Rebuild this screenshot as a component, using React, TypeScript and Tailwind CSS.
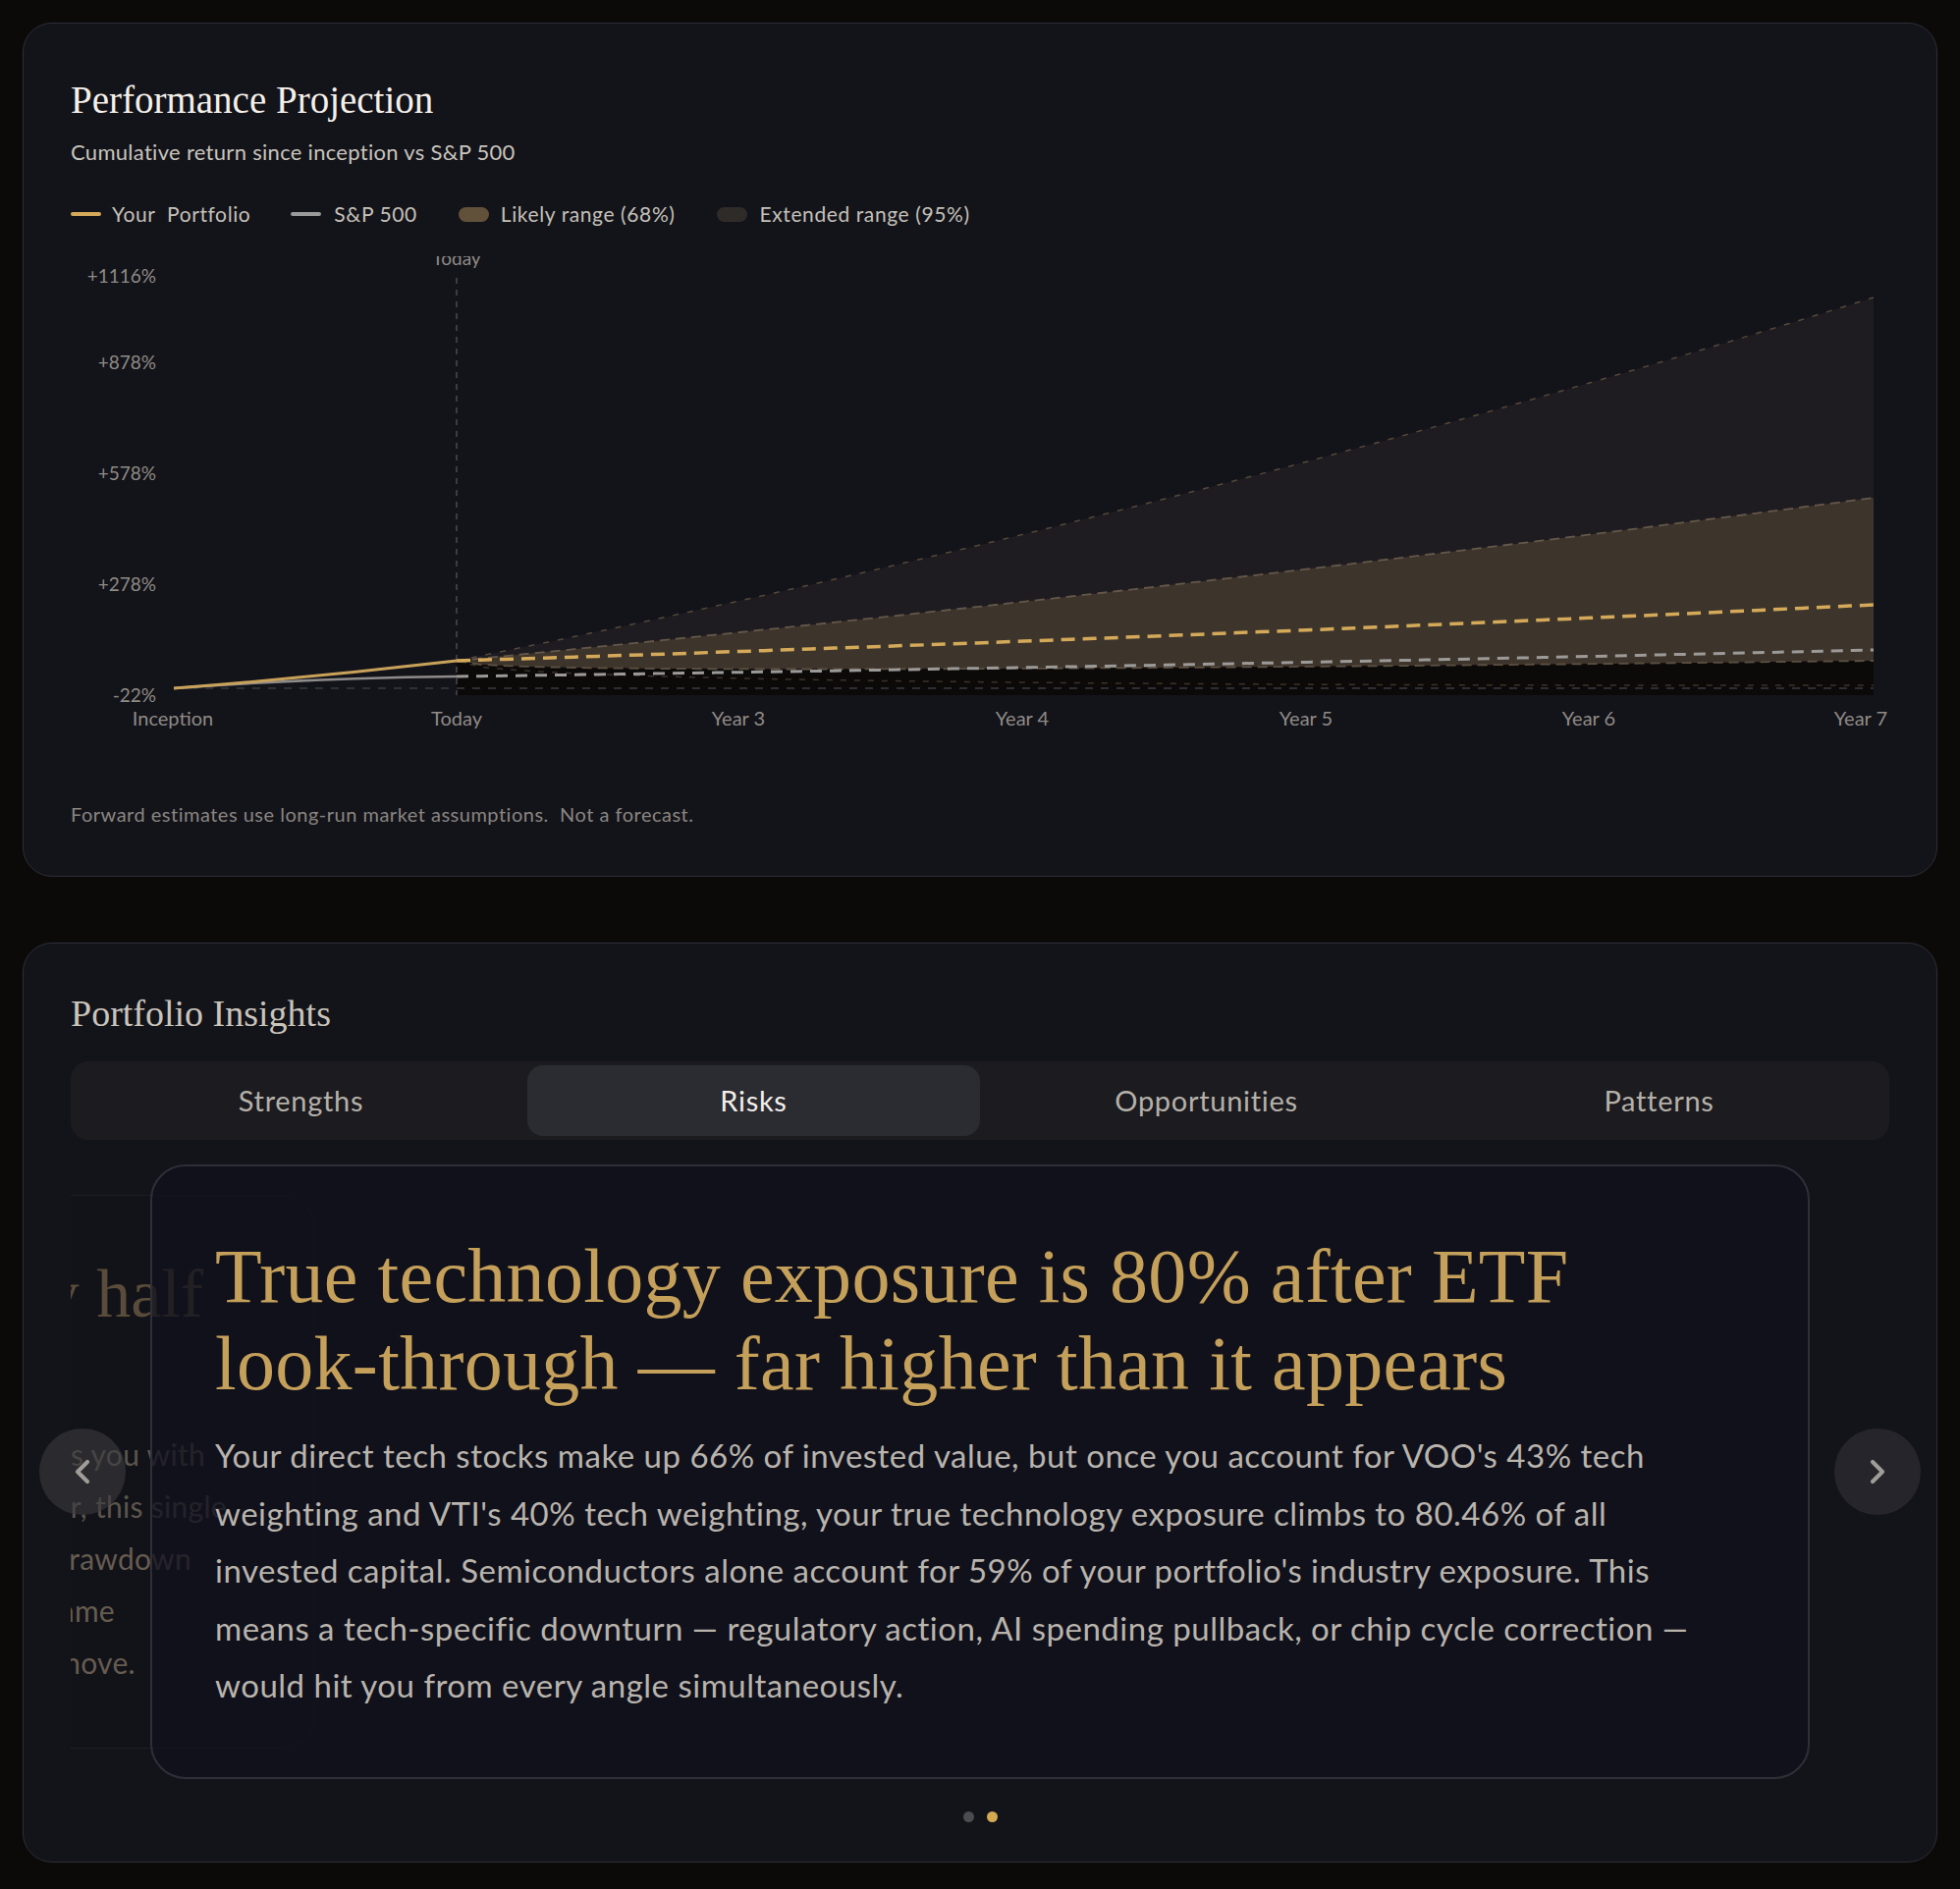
import React from "react";
import { ChevronLeft, ChevronRight } from "lucide-react";

const serif = { fontFamily: '"Liberation Serif", "DejaVu Serif", serif' };
const sans = { fontFamily: 'Lato, "Noto Sans", sans-serif' };

const X0 = 465;
const X1 = 1908;
const N = 60;

function pts(f: (t: number) => number) {
  const arr: [number, number][] = [];
  for (let i = 0; i <= N; i++) {
    const t = i / N;
    arr.push([X0 + t * (X1 - X0), f(t)]);
  }
  return arr;
}
const toPath = (a: [number, number][]) =>
  a.map((p, i) => `${i === 0 ? "M" : "L"}${p[0].toFixed(1)},${p[1].toFixed(1)}`).join(" ");
const area = (top: [number, number][], bottom: [number, number][]) =>
  toPath(top) + " " + [...bottom].reverse().map((p) => `L${p[0].toFixed(1)},${p[1].toFixed(1)}`).join(" ") + " Z";

const upper95 = pts((t) => 673 - (290 * t + 80 * t * t));
const upper68 = pts((t) => 673 - (140 * t + 26 * t * t));
const lower68 = pts((t) => 673 + 34 * Math.sqrt(t) - 34 * t);
const lower95 = pts((t) => 673 + 52 * Math.sqrt(t) - 27 * t);
const median = pts((t) => 673 - (45 * t + 12 * t * t));
const spx = pts((t) => 689 - (20 * t + 7 * t * t));
const bottom = pts(() => 708);

function Chart() {
  const yLabels: [string, number][] = [
    ["+1116%", 283],
    ["+878%", 371],
    ["+578%", 484],
    ["+278%", 597],
    ["-22%", 710],
  ];
  const xLabels: [string, number][] = [
    ["Inception", 176],
    ["Today", 465],
    ["Year 3", 752],
    ["Year 4", 1041],
    ["Year 5", 1330],
    ["Year 6", 1618],
    ["Year 7", 1895],
  ];
  return (
    <svg width={1948} height={489} viewBox="24 261 1948 489" className="block" style={sans}>
      <path d={area(upper95, lower68)} fill="#1e1c21" />
      <path d={area(upper68, lower68)} fill="#3d342b" />
      <path d={area(lower68, bottom)} fill="#0c0a09" />
      <line x1={177} y1={701} x2={1908} y2={701} stroke="#3a3a42" strokeWidth={1.5} strokeDasharray="8 8" />
      <path d={toPath(lower95)} fill="none" stroke="#3b3229" strokeWidth={1.5} strokeDasharray="6 8" />
      <path d={toPath(upper95)} fill="none" stroke="#54483a" strokeWidth={1.5} strokeDasharray="6 9" />
      <path d={toPath(upper68)} fill="none" stroke="#65584a" strokeWidth={1.8} strokeDasharray="10 6" />
      <path d={toPath(lower68)} fill="none" stroke="#5c5042" strokeWidth={1.8} strokeDasharray="10 6" />
      <line x1={465} y1={283} x2={465} y2={708} stroke="#4a4a50" strokeWidth={1.5} strokeDasharray="6 6" />
      <path d="M177,701 Q330,690 465,689" fill="none" stroke="#8e8c8a" strokeWidth={2.5} />
      <path d="M177,701 Q320,690 465,673" fill="none" stroke="#c9a25a" strokeWidth={3} />
      <path d={toPath(spx)} fill="none" stroke="#9c9a98" strokeWidth={3} strokeDasharray="12 8" />
      <path d={toPath(median)} fill="none" stroke="#d4aa5a" strokeWidth={3.5} strokeDasharray="14 8" />
      <text x={465} y={270} textAnchor="middle" fontSize={19} fill="#8f8b85">
        Today
      </text>
      {yLabels.map(([l, y]) => (
        <text key={l} x={159} y={y} textAnchor="end" dominantBaseline="middle" fontSize={19} fill="#8f8b85">
          {l}
        </text>
      ))}
      {xLabels.map(([l, x]) => (
        <text key={l} x={x} y={734} textAnchor="middle" dominantBaseline="middle" fontSize={20} fill="#8f8b85">
          {l}
        </text>
      ))}
    </svg>
  );
}

function Legend() {
  return (
    <div className="flex items-center h-[28px] text-[21px] tracking-[0.6px] text-[#c4c0b8]" style={sans}>
      <span className="w-[31px] h-[4px] rounded-full bg-[#d4aa5a]" />
      <span className="ml-[11px]">Your&nbsp; Portfolio</span>
      <span className="ml-[41px] w-[31px] h-[4px] rounded-full bg-[#9a9a9a]" />
      <span className="ml-[13px]">S&amp;P 500</span>
      <span className="ml-[42px] w-[31px] h-[15px] rounded-full bg-[#62513a]" />
      <span className="ml-[12px]">Likely range (68%)</span>
      <span className="ml-[42px] w-[31px] h-[15px] rounded-full bg-[#2f2b29]" />
      <span className="ml-[13px]">Extended range (95%)</span>
    </div>
  );
}

function PerformanceCard() {
  return (
    <div className="rounded-[30px] border border-[#2e2e36] bg-[#13131a] h-[870px] flex flex-col">
      <div className="px-[48px] pt-[56px]">
        <h2 className="text-[39px] leading-[44px] text-[#f4f0e9]" style={serif}>
          Performance Projection
        </h2>
        <p className="mt-[17px] text-[22px] tracking-[0.3px] leading-[28px] text-[#c8c4bc]" style={sans}>
          Cumulative return since inception vs S&amp;P 500
        </p>
        <div className="mt-[35px]">
          <Legend />
        </div>
      </div>
      <div className="mt-[29px]">
        <Chart />
      </div>
      <p className="px-[48px] mt-[66px] text-[20px] tracking-[0.5px] leading-[26px] text-[#8a8680]" style={sans}>
        Forward estimates use long-run market assumptions.&nbsp; Not a forecast.
      </p>
    </div>
  );
}

function Tabs() {
  const tabs = ["Strengths", "Risks", "Opportunities", "Patterns"];
  return (
    <div className="mx-[48px] h-[80px] rounded-[18px] bg-[#1c1b20] p-[4px] grid grid-cols-4" style={sans}>
      {tabs.map((t) => (
        <div
          key={t}
          className={
            t === "Risks"
              ? "flex items-center justify-center rounded-[16px] bg-[#2b2b32] text-[29px] tracking-[0.7px] text-[#f2efe9]"
              : "flex items-center justify-center text-[29px] tracking-[0.7px] text-[#b5b1a9]"
          }
        >
          {t}
        </div>
      ))}
    </div>
  );
}

function PeekCard() {
  return (
    <div className="absolute left-[-1272px] top-[31px] w-[1520px] h-[564px] rounded-[32px] border border-[#1e1e26] bg-[#121219]">
      <div className="pt-[60px] pr-[112px] text-right text-[70px] leading-[80px] text-[#5a4c3a]" style={serif}>
        exposure is nearly half
      </div>
      <div className="mt-[97px] text-right text-[30px] tracking-[0.3px] leading-[53px] text-[#5c554d]" style={sans}>
        <div className="pr-[110px]">concentration leaves you with</div>
        <div className="pr-[88px]">the market. However, this single</div>
        <div className="pr-[124px] text-[#665c50]">position drove most of the drawdown</div>
        <div className="pr-[202px] text-[#665c50]">over the same</div>
        <div className="pr-[181px] text-[#665c50]">a single move.</div>
      </div>
    </div>
  );
}

function InsightsCard() {
  return (
    <div className="rounded-[30px] border border-[#2e2e36] bg-[#13131a] h-[937px] flex flex-col">
      <h2 className="px-[48px] pt-[49px] text-[38px] leading-[44px] text-[#c9c4ba]" style={serif}>
        Portfolio Insights
      </h2>
      <div className="mt-[27px]">
        <Tabs />
      </div>
      <div className="relative mt-[25px] h-[626px]">
        <div className="absolute inset-y-0 left-[48px] right-[48px] overflow-hidden">
          <PeekCard />
          <div className="relative mx-auto w-[1690px] h-[626px] rounded-[36px] border-2 border-[#2f2f38] bg-[#12121d]/75 pl-[64px] pt-[67px]">
            <h3
              className="whitespace-nowrap text-[78px] tracking-[0.3px] leading-[89px] text-[#c4a05a]"
              style={serif}
            >
              True technology exposure is 80% after ETF
              <br />
              look-through — far higher than it appears
            </h3>
            <p
              className="mt-[20px] whitespace-nowrap text-[33px] tracking-[0.5px] leading-[58.5px] text-[#b9b4ac]"
              style={sans}
            >
              Your direct tech stocks make up 66% of invested value, but once you account for VOO's 43% tech
              <br />
              weighting and VTI's 40% tech weighting, your true technology exposure climbs to 80.46% of all
              <br />
              invested capital. Semiconductors alone account for 59% of your portfolio's industry exposure. This
              <br />
              means a tech-specific downturn — regulatory action, AI spending pullback, or chip cycle correction —
              <br />
              would hit you from every angle simultaneously.
            </p>
          </div>
        </div>
        <button className="absolute left-[16px] top-[269px] w-[88px] h-[88px] rounded-full bg-[#3a3a3e]/60 flex items-center justify-center text-[#a09d99]">
          <ChevronLeft size={40} strokeWidth={2.5} />
        </button>
        <button className="absolute right-[16px] top-[269px] w-[88px] h-[88px] rounded-full bg-[#2a2a30]/80 flex items-center justify-center text-[#a09d99]">
          <ChevronRight size={40} strokeWidth={2.5} />
        </button>
      </div>
      <div className="mt-[33px] flex justify-center gap-[13px]">
        <span className="w-[11px] h-[11px] rounded-full bg-[#4b4b50]" />
        <span className="w-[11px] h-[11px] rounded-full bg-[#d4a851]" />
      </div>
    </div>
  );
}

export default function App() {
  return (
    <div className="min-h-[1924px] bg-[#0c0a09] px-[23px] pt-[23px] pb-[27px] flex flex-col gap-[67px]">
      <PerformanceCard />
      <InsightsCard />
    </div>
  );
}
